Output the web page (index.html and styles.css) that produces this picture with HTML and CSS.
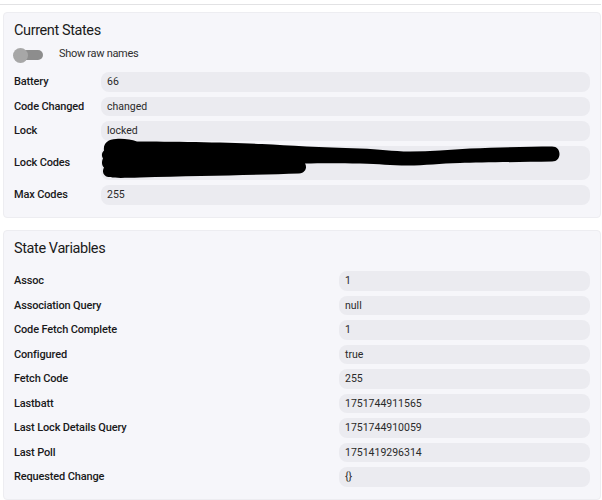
FILE: index.html
```html
<!DOCTYPE html>
<html lang="en">

<head>
    <meta charset="UTF-8">
    <meta name="viewport" content="width=device-width, initial-scale=1.0">
    <title>Device details</title>
    <link rel="stylesheet" href="styles.css">
</head>

<body>
    <div class="topbar"></div>

    <section class="card">
        <h2 class="card_title">Current States</h2>
        <label class="switch_row">
            <span class="switch"></span>
            <span class="switch_text">Show raw names</span>
        </label>
        <div class="attr_list attr_list_states">
            <div class="attr_name">Battery</div>
            <div class="attr_value">66</div>
            <div class="attr_name">Code Changed</div>
            <div class="attr_value">changed</div>
            <div class="attr_name">Lock</div>
            <div class="attr_value">locked</div>
            <div class="attr_name">Lock Codes</div>
            <div class="attr_value attr_value_tall">
                <!-- redacted by hand -->
                <svg class="scribble" width="489" height="35" viewBox="0 0 489 35">
                    <path transform="translate(-101 -145.5)" fill="#000" d="M104,150 C103,143 108,138.5 116,138.5 C124,138 131,139 137,141 C170,141 230,142 262,143.5 C290,145 320,147 360,148 C380,148.5 392,151 410,151 C430,151 450,149 470,148 C500,147 530,146 552,146 C557,146 559.5,149.5 559.5,153.5 C559.5,157.5 557,161 552,161 C520,161.5 480,162 460,162.5 C440,163 425,165 408,165 C390,165 380,163.5 360,163 C340,162.5 320,162.5 305,163 C307,166 306.5,172 299,173 C260,174.5 200,175.5 140,177 C120,177.5 108,178 105,175 C102,172 103,169 104,167 C101,164 102,160 103,158 C101,155 102,152 104,150 Z"/>
                </svg>
            </div>
            <div class="attr_name">Max Codes</div>
            <div class="attr_value">255</div>
        </div>
    </section>

    <section class="card">
        <h2 class="card_title">State Variables</h2>
        <div class="attr_list attr_list_vars">
            <div class="attr_name">Assoc</div>
            <div class="attr_value">1</div>
            <div class="attr_name">Association Query</div>
            <div class="attr_value">null</div>
            <div class="attr_name">Code Fetch Complete</div>
            <div class="attr_value">1</div>
            <div class="attr_name">Configured</div>
            <div class="attr_value">true</div>
            <div class="attr_name">Fetch Code</div>
            <div class="attr_value">255</div>
            <div class="attr_name">Lastbatt</div>
            <div class="attr_value">1751744911565</div>
            <div class="attr_name">Last Lock Details Query</div>
            <div class="attr_value">1751744910059</div>
            <div class="attr_name">Last Poll</div>
            <div class="attr_value">1751419296314</div>
            <div class="attr_name">Requested Change</div>
            <div class="attr_value">{}</div>
        </div>
    </section>
</body>

</html>
```

FILE: styles.css
```css
* {
    margin: 0;
    padding: 0;
    box-sizing: border-box;
}

body {
    background-color: #fff;
    font-family: Roboto, "Liberation Sans", sans-serif;
    color: #1c1c1c;
}

.topbar {
    height: 5px;
    width: 601px;
    border-bottom: 1px solid #e2e2e4;
}

.card {
    margin: 7px 1px 12px 3px;
    padding: 8px 10px 12.5px;
    background-color: #f6f6fa;
    border: 1px solid #ededf1;
    border-radius: 4px;
}

.card_title {
    font-size: 14.5px;
    font-weight: 400;
    line-height: 20px;
    letter-spacing: -0.4px;
    margin-bottom: 6px;
    color: #1b1b1b;
}

.switch_row {
    display: flex;
    align-items: center;
    height: 16px;
    margin-bottom: 9px;
}

.switch {
    position: relative;
    width: 29px;
    height: 9.5px;
    border-radius: 5px;
    background-color: #8d8d8d;
}

.switch::before {
    content: "";
    position: absolute;
    left: -1px;
    top: -2.75px;
    width: 15px;
    height: 15px;
    border-radius: 50%;
    background-color: #a7a7a7;
}

.switch_text {
    margin-left: 16px;
    margin-bottom: 3px;
    font-size: 11px;
    letter-spacing: -0.3px;
    line-height: 16px;
    color: #2e2e2e;
}

.attr_list {
    display: grid;
    grid-auto-rows: minmax(19.5px, auto);
    row-gap: 5px;
    align-items: center;
}

.attr_list_states {
    grid-template-columns: 87px 1fr;
}

.attr_list_vars {
    grid-template-columns: 325px 1fr;
    margin-top: 12px;
}

.attr_name {
    font-size: 11px;
    font-weight: 500;
    letter-spacing: -0.15px;
    color: #1a1a1a;
}

.attr_value {
    height: 19.5px;
    padding-left: 6px;
    line-height: 19.5px;
    font-size: 10.5px;
    color: #2a2a2a;
    background-color: #ebebf0;
    border-radius: 8px;
}

.attr_value_tall {
    position: relative;
    height: 34.5px;
}

.scribble {
    position: absolute;
    left: 0;
    top: 0;
    overflow: visible;
}
```
